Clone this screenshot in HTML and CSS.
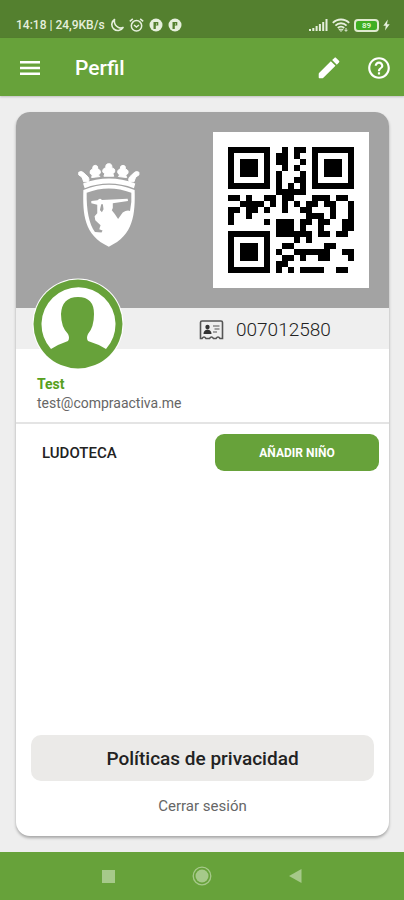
FILE: index.html
```html
<!DOCTYPE html>
<html lang="es">
<head>
  <meta charset="UTF-8">
  <meta name="viewport" content="width=device-width, initial-scale=1.0">
  <title>Perfil</title>
  <link rel="stylesheet" href="styles.css">
</head>
<body>
  <div class="status-bar">
    <span class="status-time">14:18 | 24,9KB/s</span>
    <svg width="14" height="14" viewBox="0 0 14 14" fill="none" stroke="#e6efdd" stroke-width="1.6" stroke-linejoin="round"><path d="M4.500 1.500A6 6 0 1 0 13 9.500Q11 10.500 8.500 9.500Q3.500 7 4.500 1.500z"/></svg>
    <svg class="alarm" width="15" height="14" viewBox="0 0 15 14" fill="none" stroke="#e6efdd" stroke-width="1.5"><circle cx="7.5" cy="7.8" r="5.2"/><path d="M.8 3.4L3.8.9M14.2 3.4L11.2.9M5 7l2.4 2L10 7"/></svg>
    <svg class="app-dot" width="14" height="14" viewBox="0 0 14 14"><circle cx="7" cy="7" r="6.5" fill="#e6efdd"/><path d="M4.5 11V4h4.8v3.6H6.8V11z" fill="#54802f"/><path d="M7 5.5h1v1H7z" fill="#e6efdd"/></svg>
    <svg class="app-dot" width="14" height="14" viewBox="0 0 14 14"><circle cx="7" cy="7" r="6.5" fill="#e6efdd"/><path d="M4.5 11V4h4.8v3.6H6.8V11z" fill="#54802f"/><path d="M7 5.5h1v1H7z" fill="#e6efdd"/></svg>
    <div class="status-right">
      <svg width="19" height="12" viewBox="0 0 19 12" fill="#e6efdd"><path d="M0 10h2v2H0zM3.3 9h2v3h-2zM6.6 7h2v5h-2zM9.9 5h2v7h-2zM13.2 3h2v9h-2zM16.5 0h2v12h-2z"/></svg>
      <svg width="18" height="14" viewBox="0 0 18 14" fill="none" stroke="#e6efdd" stroke-width="1.8"><path d="M.8 4.9a11.6 11.6 0 0 1 16.4 0M3.4 7.6a7.9 7.9 0 0 1 11.2 0M5.8 10a4.5 4.5 0 0 1 6.4 0"/><path d="M9 13.5l-2-2.2h4zM14 10v3M12.5 11.8l1.5 1.6 1.5-1.6" stroke-width="1"/></svg>
      <div class="battery"><span>89</span></div>
      <svg width="7" height="12" viewBox="0 0 7 12" fill="#e6efdd"><path d="M4.8.5L.3 6.8h2.5L2 11.5l4.7-6.3H4z"/></svg>
    </div>
  </div>

  <header class="app-bar">
    <button type="button" class="icon-btn" aria-label="Menú">
      <svg width="20" height="14" viewBox="0 0 20 14" fill="#fff"><path d="M0 0h20v2.4H0zM0 5.8h20v2.4H0zM0 11.6h20V14H0z"/></svg>
    </button>
    <h1>Perfil</h1>
    <button type="button" class="icon-btn" aria-label="Editar">
      <svg width="26" height="26" viewBox="0 0 24 24" fill="#fff"><path d="M2.500 17.800v2.700c0 .5.4.9.9.9h2.700c.3 0 .5-.1.7-.3L18 10l-4.300-4.300L2.800 16.700c-.2.3-.3.6-.3 1.100zM21.200 6.900c.5-.5.5-1.100 0-1.600l-2.600-2.600c-.5-.5-1.100-.5-1.600 0l-2.100 2 4.300 4.300z"/></svg>
    </button>
    <button type="button" class="icon-btn" aria-label="Ayuda">
      <svg width="26" height="26" viewBox="0 0 24 24" fill="#fff"><path d="M11 18h2v-2h-2v2zm1-16C6.480 2 2 6.480 2 12s4.480 10 10 10 10-4.480 10-10S17.520 2 12 2zm0 18c-4.410 0-8-3.590-8-8s3.590-8 8-8 8 3.590 8 8-3.590 8-8 8zm0-14c-2.210 0-4 1.790-4 4h2c0-1.100.9-2 2-2s2 .9 2 2c0 2-3 1.750-3 5h2c0-2.250 3-2.500 3-5 0-2.210-1.790-4-4-4z"/></svg>
    </button>
  </header>

  <main class="content">
    <section class="card">
      <div class="card-top">
        <!-- escudo -->
        <svg class="crest" viewBox="50 38 190 254" fill="#fff">
          <path d="M68 100Q146 70 226 100l-4 14Q146 86 73 114z"/>
          <path stroke="#fff" stroke-width="3" d="M55 66q8-5 14 1l14 13q5 6 2 14l-15 1q-3-10-6-15l-9-6zM237 66q-8-5-14 1l-14 13q-5 6-2 14l15 1q3-10 6-15l9-6z"/>
          <path stroke="#fff" stroke-width="3" d="M94 82l2-8q-10-3-6-12 2-5 7-5-1-12 8-12t8 12q5 0 7 5 3 8-6 12l5 5zM131 78l3-8q-9-3-6-11 2-6 9-6-2-13 9-13t9 13q7 0 9 6 2 8-6 11l3 8zM200 82l-3-8q10-3 7-12-2-5-8-5 2-12-7-12t-9 12q-5 0-7 5-2 8 6 12l-4 5z"/>
          <path fill-rule="evenodd" d="M69 120Q146 88 224 120C226 190 222 258 146 291C70 258 67 190 69 120zM79 128C78 180 86 222 104 247L124 248L127 242L117 238L121 226L105 211L103 199L111 190V164L93 160V153L112 151Q119 141 125 150L203 146L204 153L158 160V174L155 181L164 192L174 207L188 188Q201 179 210 183Q216 157 214 128Q146 102 79 128zM123 163L119 180L125 187L130 178L128 163z"/>
        </svg>
        <div class="qr">
          <svg viewBox="0 0 21 21" shape-rendering="crispEdges" role="img" aria-label="Código QR">
            <!-- marcas de las esquinas -->
            <path fill="none" stroke="#000" d="M.5.5h6v6h-6zM14.500.5h6v6h-6zM.5 14.500h6v6h-6z"/>
            <path d="M2 2h3v3H2zM16 2h3v3h-3zM2 16h3v3H2z"/>
            <!-- una linea por fila de modulos -->
            <path fill="none" stroke="#000" d="
              M9 .5h1M11 .5h2
              M8 1.500h2M11 1.500h1
              M8 2.500h2M12 2.500h1
              M9 3.500h1M11 3.500h1
              M8 4.500h1M12 4.500h1
              M8 5.500h1M11 5.500h2
              M8 6.500h1M10 6.500h1M12 6.500h1
              M8 7.500h5
              M0 8.500h2M3 8.500h1M6 8.500h2M9 8.500h2M14 8.500h3M18 8.500h2
              M2 9.500h4M7 9.500h1M9 9.500h1M11 9.500h1M13 9.500h2M16 9.500h2M20 9.500h1
              M0 10.500h2M3 10.500h2M6 10.500h1M9 10.500h1M12 10.500h2M17 10.500h1M20 10.500h1
              M0 11.500h1M3 11.500h1M13 11.500h3M17 11.500h1M20 11.500h1
              M0 12.500h1M6 12.500h1M8 12.500h3M12 12.500h2M15 12.500h2M19 12.500h2
              M8 13.500h3M12 13.500h1M15 13.500h1M19 13.500h2
              M8 14.500h6M15 14.500h2M18 14.500h2
              M11 15.500h1M13 15.500h1
              M9 16.500h2M16 16.500h2
              M8 17.500h1M11 17.500h6M19 17.500h2
              M9 18.500h2M12 18.500h1M15 18.500h2M20 18.500h1
              M8 19.500h2
              M8 20.500h1M10 20.500h1M12 20.500h4M18 20.500h2"/>
          </svg>
        </div>
      </div>

      <div class="card-number">
        <svg class="avatar" viewBox="0 0 92 92">
          <circle cx="46" cy="46" r="45.500" fill="#fff"/>
          <circle cx="46" cy="46" r="44.500" fill="#67a23a"/>
          <path fill="#fff" d="M19 71a37 37 0 1 1 55 0q-8-5-18-8-2-3 0-7 6-7 6-20Q62 19 46 19T29 36q0 13 7 20 2 4 0 7-9 3-17 8z"/>
        </svg>
        <svg width="25" height="20" viewBox="0 0 25 20" fill="none" stroke="#555" stroke-width="1.600"><path d="M3 18.500H1.500V2.500q0-1.500 1.500-1.500h19q1.500 0 1.500 1.500v16H21q-2-3-4 0h-2.500q-2-3-4 0H7q-2-3-4 0z"/><circle cx="8.500" cy="7" r="2.200" fill="#333" stroke="none"/><path d="M4.500 14q0-4 4-4.500 4 .5 4 4.500z" fill="#333" stroke="none"/><path d="M14 6h6.500M15.500 9h5M14 12h4" stroke-width="1.200"/></svg>
        <span>007012580</span>
      </div>

      <div class="user">
        <h2>Test</h2>
        <p>test@compraactiva.me</p>
      </div>

      <div class="service">
        <h3>LUDOTECA</h3>
        <button type="button" class="add-btn">AÑADIR NIÑO</button>
      </div>

      <div class="card-footer">
        <button type="button" class="policy-btn">Políticas de privacidad</button>
        <a href="#" class="logout">Cerrar sesión</a>
      </div>
    </section>
  </main>

  <nav class="nav-bar">
    <button type="button" class="icon-btn" aria-label="Recientes"><svg width="20" height="20" viewBox="0 0 20 20" fill="#a6c98a"><path d="M4 4h13v13H4z"/></svg></button>
    <button type="button" class="icon-btn" aria-label="Inicio"><svg width="20" height="20" viewBox="0 0 20 20"><circle cx="10" cy="10" r="8.800" fill="none" stroke="#a6c98a" stroke-width="1.300"/><circle cx="10" cy="10" r="6.500" fill="#a6c98a"/></svg></button>
    <button type="button" class="icon-btn" aria-label="Atrás"><svg width="20" height="20" viewBox="0 0 20 20" fill="#a6c98a"><path d="M15.500 3v14L3 10z"/></svg></button>
  </nav>
</body>
</html>
```
FILE: styles.css
```css
* {
  box-sizing: border-box;
}
body {
  margin: 0;
  min-height: 100vh;
  display: flex;
  flex-direction: column;
  background: #eee;
  color: #333;
  font-family: Roboto, sans-serif;
}
h1, h2, h3, p {
  margin: 0;
}
button {
  font-family: inherit;
  border: none;
  cursor: pointer;
}
svg {
  display: block;
  flex-shrink: 0;
}
.icon-btn {
  background: none;
  padding: 0;
}

/* barra de estado */
.status-bar {
  height: 38px;
  padding: 12px 14px 0 16px;
  display: flex;
  align-items: center;
  background: #54802f;
  color: #e6efdd;
}
.status-time {
  font-size: 12px;
  font-weight: 500;
  margin-right: 5px;
}
.alarm,
.app-dot {
  margin-left: 5px;
}
.status-right {
  margin-left: auto;
  display: flex;
  align-items: center;
  gap: 4px;
}
.battery {
  width: 25px;
  height: 13px;
  border: 2px solid #dfeacf;
  border-radius: 4px;
  background: #3fae22;
  color: #d9f5cc;
  font-size: 8px;
  font-weight: 700;
  line-height: 9px;
  text-align: center;
}

/* cabecera */
.app-bar {
  height: 58px;
  padding: 2px 12px 0 20px;
  display: flex;
  align-items: center;
  gap: 24px;
  background: #67a23a;
  color: #fff;
  box-shadow: 0 1px 2px rgba(0, 0, 0, 0.2);
}
.app-bar h1 {
  flex: 1;
  margin-left: 11px;
  font-size: 21px;
  font-weight: 500;
}

.content {
  flex: 1;
  display: flex;
  padding: 16px 15px 16px 16px;
}
.card {
  flex: 1;
  display: flex;
  flex-direction: column;
  background: #fff;
  border-radius: 14px;
  box-shadow: 0 2px 3px rgba(0, 0, 0, 0.3);
}
.card-top {
  height: 196px;
  padding: 0 20px 0 61px;
  display: flex;
  align-items: center;
  justify-content: space-between;
  background: #a3a3a3;
  border-radius: 14px 14px 0 0;
}
.crest {
  width: 63px;
  height: 84px;
  margin-bottom: 10px;
}
.qr {
  padding: 15px;
  background: #fff;
}
.qr svg {
  width: 126px;
  height: 126px;
}
.card-number {
  position: relative;
  height: 41px;
  padding: 2px 0 0 183px;
  display: flex;
  align-items: center;
  gap: 12px;
  background: #efefef;
  font-size: 19px;
  font-weight: 300;
  color: #222;
}
/* el avatar queda encima de las dos franjas */
.avatar {
  position: absolute;
  left: 16px;
  top: -30px;
  width: 92px;
  height: 92px;
}
.user {
  padding: 26px 21px 9px;
  border-bottom: 2px solid #e4e4e4;
}
.user h2 {
  font-size: 14px;
  line-height: 18px;
  font-weight: 700;
  color: #57a020;
}
.user p {
  font-size: 14px;
  line-height: 20px;
  color: #666;
}
.service {
  padding: 10px 10px 0 26px;
  display: flex;
  align-items: center;
  justify-content: space-between;
}
.service h3 {
  font-size: 15px;
  font-weight: 500;
  color: #222;
}
.add-btn {
  width: 164px;
  height: 37px;
  border-radius: 9px;
  background: #67a23a;
  color: #fff;
  font-size: 12px;
  font-weight: 700;
}
.card-footer {
  margin-top: auto;
  padding: 0 15px 20px;
  display: flex;
  flex-direction: column;
  align-items: center;
  gap: 15px;
}
.policy-btn {
  width: 100%;
  height: 46px;
  border-radius: 10px;
  background: #ebeae8;
  color: #222;
  font-size: 19px;
  font-weight: 500;
}
.logout {
  font-size: 15px;
  line-height: 20px;
  color: #666;
  text-decoration: none;
}

/* botones del sistema */
.nav-bar {
  height: 48px;
  display: flex;
  align-items: center;
  justify-content: center;
  gap: 74px;
  background: #67a23a;
}
```
